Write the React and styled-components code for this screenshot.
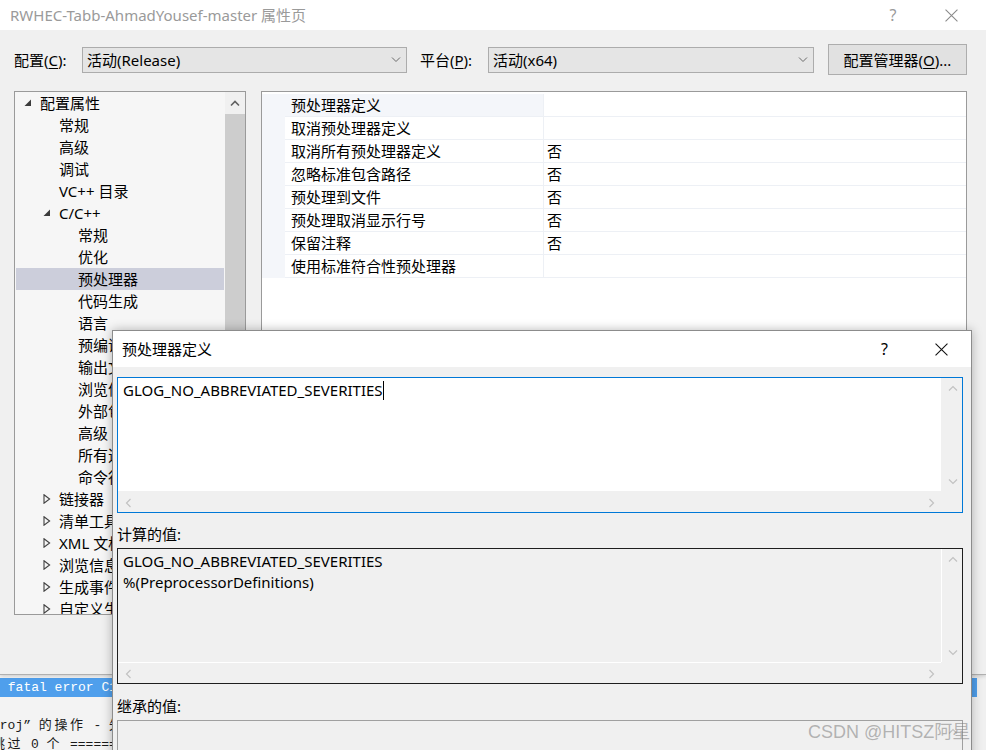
import React from "react";
import styled, { createGlobalStyle } from "styled-components";

const uiFont = `"Noto Sans", "Noto Sans CJK SC", sans-serif`;
const monoFont = `"Liberation Mono", "Noto Sans CJK SC", monospace`;

const GlobalStyle = createGlobalStyle`
  *, *::before, *::after { box-sizing: border-box; }
  html, body { margin: 0; padding: 0; background: #f0f0f0; }
  body { font-family: ${uiFont}; font-size: 15px; color: #000; }
`;

/* ---------- shared glyphs ---------- */

const chevronPaths = {
  up: "M1 5.5 L5 1.5 L9 5.5",
  down: "M1 1.5 L5 5.5 L9 1.5",
  left: "M5.5 1 L1.5 5 L5.5 9",
  right: "M1.5 1 L5.5 5 L1.5 9",
};

function Chevron({ dir, color = "#a6a6a6", width = 1.2 }) {
  const vertical = dir === "up" || dir === "down";
  const w = vertical ? 10 : 7;
  const h = vertical ? 7 : 10;
  return (
    <svg width={w} height={h} viewBox={`0 0 ${w} ${h}`}>
      <path d={chevronPaths[dir]} fill="none" stroke={color} strokeWidth={width} />
    </svg>
  );
}

function CloseGlyph({ color, size = 12 }) {
  return (
    <svg width={size} height={size} viewBox="0 0 12 12">
      <path d="M0.5 0.5 L11.5 11.5 M11.5 0.5 L0.5 11.5" stroke={color} strokeWidth="1" fill="none" />
    </svg>
  );
}

/* ---------- desktop ---------- */

const Desktop = styled.div`
  position: relative;
  width: 986px;
  height: 750px;
  overflow: hidden;
  display: flex;
  flex-direction: column;
  background: #f0f0f0;
`;

/* ---------- property pages window ---------- */

const PropertyWindow = styled.div`
  position: relative;
  z-index: 1;
  height: 675px;
  flex: none;
  display: flex;
  flex-direction: column;
  background: #f0f0f0;
  border-bottom: 1px solid #b0b0b0;
  box-shadow: 0 1px 4px rgba(0, 0, 0, 0.18);
`;

const TitleBar = styled.div`
  height: 30px;
  flex: none;
  display: flex;
  align-items: center;
  background: #fff;
  padding-left: 10px;
  color: ${(p) => p.$tone};
  font-size: 15px;
  line-height: 20px;
`;

const TitleText = styled.div`
  flex: 1;
  white-space: nowrap;
`;

const CaptionButtons = styled.div`
  display: flex;
  padding-right: ${(p) => p.$endGap}px;
  align-self: stretch;
`;

const CaptionButton = styled.div`
  width: ${(p) => p.$w}px;
  display: flex;
  align-items: center;
  justify-content: center;
  font-size: 16px;
  color: ${(p) => p.$tone};
`;

const WindowBody = styled.div`
  flex: 1;
  display: flex;
  flex-direction: column;
  padding: 14px 19px 0 14px;
`;

const Toolbar = styled.div`
  height: 31px;
  display: flex;
  align-items: center;
`;

const FieldLabel = styled.label`
  width: 68px;
  margin-left: ${(p) => p.$offset || 0}px;
  font-size: 15px;
  line-height: 20px;
  white-space: nowrap;
  u { text-decoration-thickness: 1px; text-underline-offset: 2px; }
`;

const ComboBox = styled.div`
  width: ${(p) => p.$w}px;
  height: 26px;
  display: flex;
  align-items: center;
  padding: 0 5px 0 4px;
  background: #e5e5e5;
  border: 1px solid #acacac;
  font-size: 15px;
  line-height: 20px;
  white-space: nowrap;
  span { flex: 1; }
`;

const PushButton = styled.button`
  margin-left: 14px;
  width: 139px;
  height: 31px;
  background: #e1e1e1;
  border: 1px solid #adadad;
  font-family: ${uiFont};
  font-size: 15px;
  line-height: 20px;
  color: #000;
  padding: 0;
  u { text-decoration-thickness: 1px; text-underline-offset: 2px; }
`;

const Panes = styled.div`
  margin-top: 16px;
  height: 524px;
  display: flex;
  gap: 15px;
`;

/* ---------- tree ---------- */

const Tree = styled.div`
  width: 232px;
  flex: none;
  border: 1px solid #9a9a9a;
  background: #f6f6f6;
  display: grid;
  grid-template-columns: 1fr 20px;
  overflow: hidden;
`;

const TreeList = styled.div`
  padding: 0 1px;
  display: flex;
  flex-direction: column;
  overflow: hidden;
`;

const TreeRow = styled.div`
  height: 22px;
  flex: none;
  display: flex;
  align-items: center;
  padding-left: ${(p) => 8 + p.$level * 19}px;
  background: ${(p) => (p.$selected ? "#cccedb" : "transparent")};
  font-size: 15px;
  line-height: 22px;
  white-space: nowrap;
`;

const Expander = styled.span`
  width: 16px;
  flex: none;
  display: flex;
  align-items: center;
`;

function TreeToggle({ state }) {
  if (state === "open") {
    return (
      <svg width="8" height="8" viewBox="0 0 8 8">
        <path d="M7 0.5 L7 7 L0.5 7 Z" fill="#3c3c3c" />
      </svg>
    );
  }
  if (state === "closed") {
    return (
      <svg width="8" height="10" viewBox="0 0 8 10">
        <path d="M1 0.8 L6.6 5 L1 9.2 Z" fill="none" stroke="#404040" strokeWidth="1.1" />
      </svg>
    );
  }
  return null;
}

const ScrollTrack = styled.div`
  display: flex;
  flex-direction: column;
  background: #f0f0f0;
`;

const ScrollButton = styled.div`
  height: 22px;
  flex: none;
  display: flex;
  align-items: center;
  justify-content: center;
`;

const ScrollThumb = styled.div`
  height: ${(p) => p.$h}px;
  flex: none;
  background: #cdcdcd;
`;

/* ---------- property grid ---------- */

const PropertyGrid = styled.div`
  flex: 1;
  border: 1px solid #9a9a9a;
  background: #fff;
  padding-top: 2px;
  display: flex;
  flex-direction: column;
`;

const GridRow = styled.div`
  height: 23px;
  display: grid;
  grid-template-columns: 23px 259px 1fr;
  font-size: 15px;
  line-height: 22px;
`;

const Gutter = styled.div`
  background: #f4f6fa;
`;

const NameCell = styled.div`
  padding-left: 6px;
  background: ${(p) => (p.$active ? "#f4f6fa" : "#fff")};
  border-bottom: 1px solid #edf0f5;
  border-right: 1px solid #edf0f5;
  white-space: nowrap;
`;

const ValueCell = styled.div`
  padding-left: 3px;
  border-bottom: 1px solid #edf0f5;
`;

/* ---------- output pane behind ---------- */

const OutputPane = styled.div`
  flex: 1;
  width: 977px;
  background: #f3f3f3;
  padding-top: 3px;
  font-family: ${monoFont};
  font-size: 13px;
  line-height: 19px;
  color: #1a1a1a;
  overflow: hidden;
`;

const OutputLine = styled.div`
  height: 19px;
  white-space: pre;
  margin-left: ${(p) => p.$shift || 0}px;
  background: ${(p) => (p.$hot ? "#4f9fec" : "transparent")};
  color: ${(p) => (p.$hot ? "#fff" : "#1a1a1a")};
`;

/* double-width cells for CJK text in the console font */
const Wide = styled.span`
  letter-spacing: 2.6px;
`;

/* ---------- string editor dialog ---------- */

const Dialog = styled.div`
  position: absolute;
  z-index: 3;
  left: 112px;
  top: 330px;
  width: 860px;
  height: 440px;
  display: flex;
  flex-direction: column;
  background: #f0f0f0;
  border: 1px solid #8c8c8c;
  box-shadow: 0 0 10px rgba(0, 0, 0, 0.28);
`;

const DialogTitle = styled.div`
  height: 36px;
  flex: none;
  display: flex;
  align-items: center;
  background: #fff;
  padding-left: 9px;
  font-size: 15px;
  line-height: 20px;
`;

const DialogBody = styled.div`
  display: flex;
  flex-direction: column;
  padding: 10px 8px 0 4px;
`;

const SectionLabel = styled.div`
  margin: ${(p) => p.$top}px 0 4px 0;
  font-size: 15px;
  line-height: 20px;
`;

const TextBox = styled.div`
  height: 136px;
  flex: none;
  display: grid;
  grid-template-columns: 1fr 21px;
  grid-template-rows: 1fr 21px;
  border: 1px solid ${(p) => p.$border};
  background: #f0f0f0;
`;

const TextArea = styled.div`
  padding: 2px 5px;
  background: ${(p) => (p.$editable ? "#fff" : "#f0f0f0")};
  font-size: 15px;
  line-height: 21px;
  white-space: pre;
  overflow: hidden;
`;

const Caret = styled.span`
  display: inline-block;
  width: 1px;
  height: 19px;
  background: #000;
  vertical-align: -4px;
`;

const VScroll = styled.div`
  display: flex;
  flex-direction: column;
  justify-content: space-between;
  border-left: 1px solid ${(p) => (p.$split ? "#fff" : "transparent")};
`;

const HScroll = styled.div`
  display: flex;
  justify-content: space-between;
  border-top: 1px solid ${(p) => (p.$split ? "#fff" : "transparent")};
`;

const ArrowCell = styled.div`
  width: ${(p) => (p.$wide ? 21 : 20)}px;
  height: ${(p) => (p.$tall ? 21 : 20)}px;
  display: flex;
  align-items: center;
  justify-content: center;
`;

const Watermark = styled.div`
  position: absolute;
  z-index: 5;
  left: 808px;
  top: 720px;
  font-family: "Liberation Sans", "Noto Sans CJK SC", sans-serif;
  font-size: 18px;
  line-height: 24px;
  color: rgba(125, 125, 125, 0.55);
  white-space: nowrap;
`;

/* ---------- data ---------- */

const treeItems = [
  { level: 0, label: "配置属性", toggle: "open" },
  { level: 1, label: "常规" },
  { level: 1, label: "高级" },
  { level: 1, label: "调试" },
  { level: 1, label: "VC++ 目录" },
  { level: 1, label: "C/C++", toggle: "open" },
  { level: 2, label: "常规" },
  { level: 2, label: "优化" },
  { level: 2, label: "预处理器", selected: true },
  { level: 2, label: "代码生成" },
  { level: 2, label: "语言" },
  { level: 2, label: "预编译头" },
  { level: 2, label: "输出文件" },
  { level: 2, label: "浏览信息" },
  { level: 2, label: "外部包含" },
  { level: 2, label: "高级" },
  { level: 2, label: "所有选项" },
  { level: 2, label: "命令行" },
  { level: 1, label: "链接器", toggle: "closed" },
  { level: 1, label: "清单工具", toggle: "closed" },
  { level: 1, label: "XML 文档生成器", toggle: "closed" },
  { level: 1, label: "浏览信息", toggle: "closed" },
  { level: 1, label: "生成事件", toggle: "closed" },
  { level: 1, label: "自定义生成步骤", toggle: "closed" },
];

const properties = [
  ["预处理器定义", ""],
  ["取消预处理器定义", ""],
  ["取消所有预处理器定义", "否"],
  ["忽略标准包含路径", "否"],
  ["预处理到文件", "否"],
  ["预处理取消显示行号", "否"],
  ["保留注释", "否"],
  ["使用标准符合性预处理器", ""],
];

function Scrollers({ split }) {
  return (
    <>
      <VScroll $split={split}>
        <ArrowCell $wide>
          <Chevron dir="up" color="#c2c2c2" />
        </ArrowCell>
        <ArrowCell $wide>
          <Chevron dir="down" color="#c2c2c2" />
        </ArrowCell>
      </VScroll>
      <HScroll $split={split}>
        <ArrowCell $tall>
          <Chevron dir="left" color="#c2c2c2" />
        </ArrowCell>
        <ArrowCell $tall>
          <Chevron dir="right" color="#c2c2c2" />
        </ArrowCell>
      </HScroll>
      <div />
    </>
  );
}

export default function App() {
  return (
    <>
      <GlobalStyle />
      <Desktop>
        <PropertyWindow>
          <TitleBar $tone="#9a9a9a">
            <TitleText>RWHEC-Tabb-AhmadYousef-master 属性页</TitleText>
            <CaptionButtons $endGap={6}>
              <CaptionButton $w={58} $tone="#9a9a9a">?</CaptionButton>
              <CaptionButton $w={58} $tone="#9a9a9a">
                <CloseGlyph color="#8a8a8a" size={13} />
              </CaptionButton>
            </CaptionButtons>
          </TitleBar>

          <WindowBody>
            <Toolbar>
              <FieldLabel>
                配置(<u>C</u>):
              </FieldLabel>
              <ComboBox $w={325}>
                <span>活动(Release)</span>
                <Chevron dir="down" color="#6a6a6a" width={1} />
              </ComboBox>
              <FieldLabel $offset={13}>
                平台(<u>P</u>):
              </FieldLabel>
              <ComboBox $w={326}>
                <span>活动(x64)</span>
                <Chevron dir="down" color="#6a6a6a" width={1} />
              </ComboBox>
              <PushButton>
                配置管理器(<u>O</u>)...
              </PushButton>
            </Toolbar>

            <Panes>
              <Tree>
                <TreeList>
                  {treeItems.map((item, i) => (
                    <TreeRow key={i} $level={item.level} $selected={item.selected}>
                      <Expander>
                        <TreeToggle state={item.toggle} />
                      </Expander>
                      {item.label}
                    </TreeRow>
                  ))}
                </TreeList>
                <ScrollTrack>
                  <ScrollButton>
                    <Chevron dir="up" color="#606060" width={1.6} />
                  </ScrollButton>
                  <ScrollThumb $h={400} />
                </ScrollTrack>
              </Tree>

              <PropertyGrid>
                {properties.map(([name, value], i) => (
                  <GridRow key={name}>
                    <Gutter />
                    <NameCell $active={i === 0}>{name}</NameCell>
                    <ValueCell>{value}</ValueCell>
                  </GridRow>
                ))}
              </PropertyGrid>
            </Panes>
          </WindowBody>
        </PropertyWindow>

        <OutputPane>
          <OutputLine $hot>{" fatal error C1083: 无法打开包括文件"}</OutputLine>
          <OutputLine />
          <OutputLine $shift={-8}>
            {"proj” "}
            <Wide>的操作</Wide>
            {" - "}
            <Wide>失败。</Wide>
          </OutputLine>
          <OutputLine $shift={-8}>
            <Wide>跳过</Wide>
            {" 0 "}
            <Wide>个</Wide>
            {" ==========="}
          </OutputLine>
        </OutputPane>

        <Dialog>
          <DialogTitle>
            <TitleText>预处理器定义</TitleText>
            <CaptionButtons $endGap={1}>
              <CaptionButton $w={57} $tone="#000">?</CaptionButton>
              <CaptionButton $w={57} $tone="#000">
                <CloseGlyph color="#111" size={13} />
              </CaptionButton>
            </CaptionButtons>
          </DialogTitle>

          <DialogBody>
            <TextBox $border="#0078d7">
              <TextArea $editable>
                GLOG_NO_ABBREVIATED_SEVERITIES
                <Caret />
              </TextArea>
              <Scrollers />
            </TextBox>

            <SectionLabel $top={11}>计算的值:</SectionLabel>
            <TextBox $border="#1e1e1e">
              <TextArea>
                {"GLOG_NO_ABBREVIATED_SEVERITIES\n%(PreprocessorDefinitions)"}
              </TextArea>
              <Scrollers split />
            </TextBox>

            <SectionLabel $top={12}>继承的值:</SectionLabel>
            <TextBox $border="#a0a0a0">
              <TextArea />
              <Scrollers />
            </TextBox>
          </DialogBody>
        </Dialog>

        <Watermark>CSDN @HITSZ阿星</Watermark>
      </Desktop>
    </>
  );
}
